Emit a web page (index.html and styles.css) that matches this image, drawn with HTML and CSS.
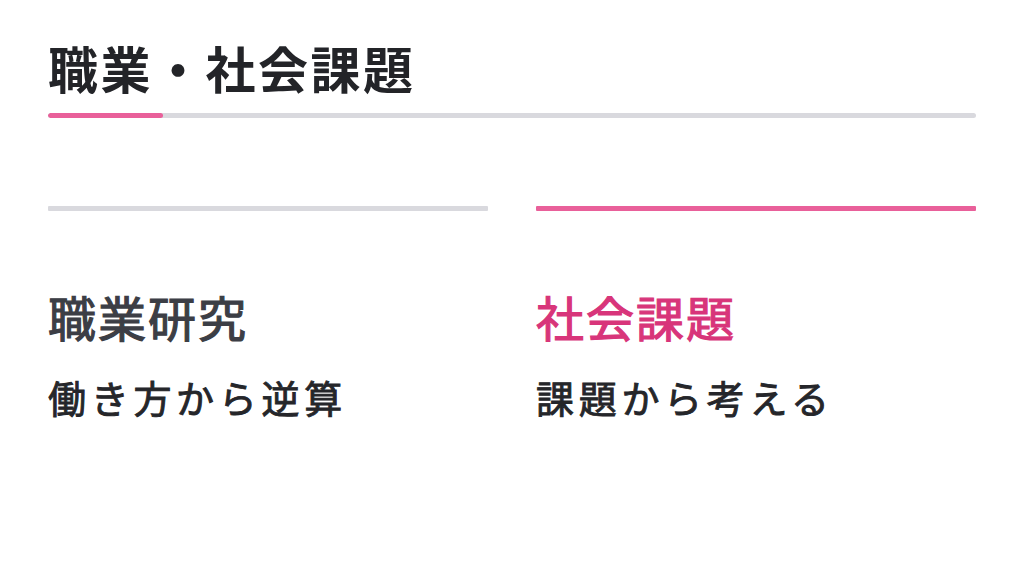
FILE: index.html
```html
<!DOCTYPE html>
<html lang="ja">
<head>
<meta charset="utf-8">
<link rel="stylesheet" href="styles.css">
</head>
<body>
<div class="page">
  <header class="head">
    <h1 class="title">職業・社会課題</h1>
    <div class="progress"><div class="progress-fill"></div></div>
  </header>
  <div class="tabs">
    <div class="tab">
      <div class="tab-bar"></div>
      <div class="tab-title">職業研究</div>
      <div class="tab-sub">働き方から逆算</div>
    </div>
    <div class="tab active">
      <div class="tab-bar"></div>
      <div class="tab-title">社会課題</div>
      <div class="tab-sub">課題から考える</div>
    </div>
  </div>
</div>
</body>
</html>
```
FILE: styles.css
```css
html, body {
  margin: 0;
  padding: 0;
  background: #ffffff;
}
body {
  font-family: "Noto Sans CJK JP", "Noto Sans", sans-serif;
  width: 1024px;
  height: 576px;
  overflow: hidden;
}
.page {
  padding: 31px 48px 0 48px;
}
.head {
  display: flex;
  flex-direction: column;
}
.title {
  margin: 0;
  font-size: 50px;
  font-weight: 700;
  line-height: 72px;
  letter-spacing: 2.5px;
  color: #232428;
}
.progress {
  margin-top: 10px;
  height: 5px;
  border-radius: 3px;
  background: #d9d9de;
  overflow: hidden;
}
.progress-fill {
  width: 115px;
  height: 100%;
  border-radius: 3px;
  background: #e9609a;
}
.tabs {
  margin-top: 88px;
  display: grid;
  grid-template-columns: 1fr 1fr;
  column-gap: 48px;
}
.tab {
  display: flex;
  flex-direction: column;
}
.tab-bar {
  height: 5px;
  border-radius: 1px;
  background: #d9d9de;
}
.tab.active .tab-bar {
  background: #e9609a;
}
.tab-title {
  margin-top: 73px;
  font-size: 48px;
  font-weight: 400;
  line-height: 64px;
  letter-spacing: 2px;
  color: #3c3e45;
  -webkit-text-stroke: 1.2px currentColor;
}
.tab.active .tab-title {
  color: #d8357a;
}
.tab-sub {
  margin-top: 23px;
  font-size: 38px;
  font-weight: 400;
  line-height: 52px;
  letter-spacing: 4.7px;
  color: #25262a;
  -webkit-text-stroke: 0.9px currentColor;
}
```
